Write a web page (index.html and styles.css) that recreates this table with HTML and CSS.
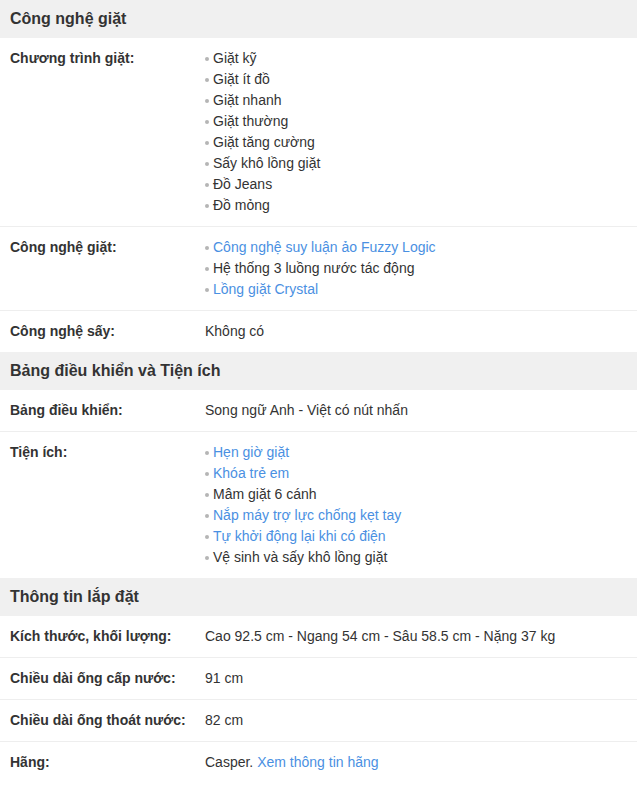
FILE: index.html
```html
<!DOCTYPE html>
<html lang="vi">
<head>
<meta charset="utf-8">
<title>Thông số</title>
<link rel="stylesheet" href="styles.css">
</head>
<body>
<div class="specs">
  <h3 class="sec">Công nghệ giặt</h3>
  <div class="row">
    <div class="lbl">Chương trình giặt:</div>
    <ul class="val list">
      <li>Giặt kỹ</li>
      <li>Giặt ít đồ</li>
      <li>Giặt nhanh</li>
      <li>Giặt thường</li>
      <li>Giặt tăng cường</li>
      <li>Sấy khô lồng giặt</li>
      <li>Đồ Jeans</li>
      <li>Đồ mỏng</li>
    </ul>
  </div>
  <div class="row">
    <div class="lbl">Công nghệ giặt:</div>
    <ul class="val list">
      <li><a href="#">Công nghệ suy luận ảo Fuzzy Logic</a></li>
      <li>Hệ thống 3 luồng nước tác động</li>
      <li><a href="#">Lồng giặt Crystal</a></li>
    </ul>
  </div>
  <div class="row last">
    <div class="lbl">Công nghệ sấy:</div>
    <div class="val">Không có</div>
  </div>

  <h3 class="sec">Bảng điều khiển và Tiện ích</h3>
  <div class="row">
    <div class="lbl">Bảng điều khiển:</div>
    <div class="val">Song ngữ Anh - Việt có nút nhấn</div>
  </div>
  <div class="row last">
    <div class="lbl">Tiện ích:</div>
    <ul class="val list">
      <li><a href="#">Hẹn giờ giặt</a></li>
      <li><a href="#">Khóa trẻ em</a></li>
      <li>Mâm giặt 6 cánh</li>
      <li><a href="#">Nắp máy trợ lực chống kẹt tay</a></li>
      <li><a href="#">Tự khởi động lại khi có điện</a></li>
      <li>Vệ sinh và sấy khô lồng giặt</li>
    </ul>
  </div>

  <h3 class="sec">Thông tin lắp đặt</h3>
  <div class="row">
    <div class="lbl">Kích thước, khối lượng:</div>
    <div class="val">Cao 92.5 cm - Ngang 54 cm - Sâu 58.5 cm - Nặng 37 kg</div>
  </div>
  <div class="row">
    <div class="lbl">Chiều dài ống cấp nước:</div>
    <div class="val">91 cm</div>
  </div>
  <div class="row">
    <div class="lbl">Chiều dài ống thoát nước:</div>
    <div class="val">82 cm</div>
  </div>
  <div class="row last">
    <div class="lbl">Hãng:</div>
    <div class="val">Casper. <a href="#">Xem thông tin hãng</a></div>
  </div>
</div>
</body>
</html>
```
FILE: styles.css
```css
html, body {
  margin: 0;
  padding: 0;
  background: #fff;
}
body {
  font-family: "Liberation Sans", Arial, sans-serif;
  font-size: 14px;
  color: #333;
}
.specs {
  width: 637px;
}
.sec {
  margin: 0;
  height: 38px;
  line-height: 38px;
  padding-left: 10px;
  background: #f0f0f0;
  font-size: 16px;
  font-weight: bold;
  color: #333;
}
.row {
  display: grid;
  grid-template-columns: 195px 1fr;
  padding: 10px 0 10px 10px;
  border-bottom: 1px solid #eee;
  line-height: 21px;
}
.row.last {
  border-bottom: none;
}
.lbl {
  font-weight: bold;
  color: #333;
}
.val {
  margin: 0;
  padding: 0;
}
.list {
  list-style: none;
}
.list li {
  display: flex;
  align-items: center;
}
.list li::before {
  content: "";
  width: 4px;
  height: 4px;
  border-radius: 50%;
  background: #b5b5b5;
  margin-right: 4px;
  flex: none;
}
a {
  color: #4a90e2;
  text-decoration: none;
}
```
